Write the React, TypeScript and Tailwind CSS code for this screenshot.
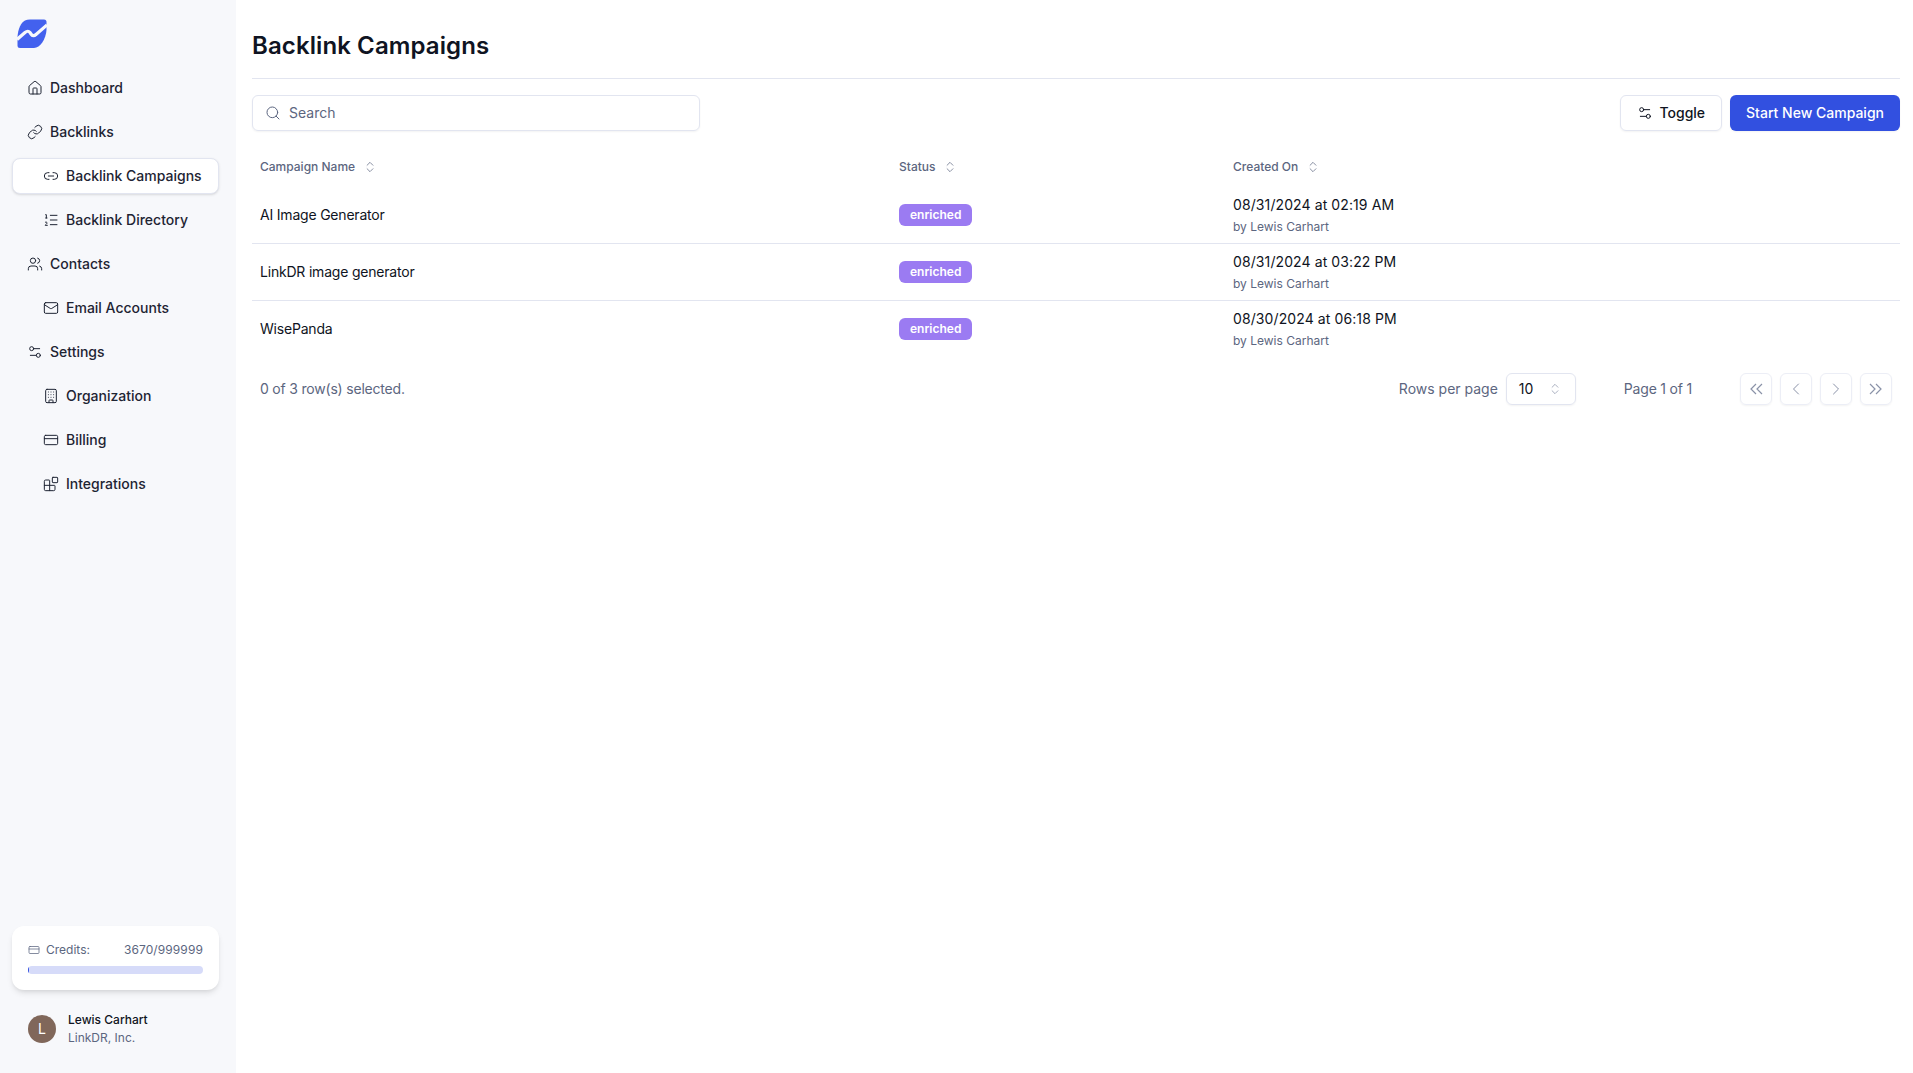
import React from 'react';
import {
  House,
  Link,
  Link2,
  ListOrdered,
  Users,
  Mail,
  Settings2,
  Building,
  CreditCard,
  Blocks,
  Search,
  ChevronsUpDown,
  ChevronLeft,
  ChevronRight,
} from 'lucide-react';

const navItems = [
  { label: 'Dashboard', icon: House, sub: false },
  { label: 'Backlinks', icon: Link, sub: false },
  { label: 'Backlink Campaigns', icon: Link2, sub: true, active: true },
  { label: 'Backlink Directory', icon: ListOrdered, sub: true },
  { label: 'Contacts', icon: Users, sub: false },
  { label: 'Email Accounts', icon: Mail, sub: true },
  { label: 'Settings', icon: Settings2, sub: false },
  { label: 'Organization', icon: Building, sub: true },
  { label: 'Billing', icon: CreditCard, sub: true },
  { label: 'Integrations', icon: Blocks, sub: true },
];

const rows = [
  { name: 'AI Image Generator', created: '08/31/2024 at 02:19 AM' },
  { name: 'LinkDR image generator', created: '08/31/2024 at 03:22 PM' },
  { name: 'WisePanda', created: '08/30/2024 at 06:18 PM' },
];

const columns = ['Campaign Name', 'Status', 'Created On'];

const Logo = () => (
  <svg width="30" height="30" viewBox="0 0 30 30" fill="none">
    <path
      d="M8 1.5Q10 .5 13 .5H27Q29.5 .5 29.5 3V11C29 20 23 29 17 29H3Q.5 29 .5 26.5V18C1 10 4 3.5 8 1.5Z"
      fill="#4361ee"
    />
    <path
      d="M0 20.5L8 13.5Q11 11 13 13.5L14 15Q16 18 19 15.5L30 6"
      stroke="#f7f8fb"
      strokeWidth="3.2"
    />
  </svg>
);

const DoubleLeft = () => (
  <svg width="16" height="16" viewBox="0 0 16 16" fill="none" stroke="currentColor" strokeWidth="1.2">
    <path d="M8 3L3 8l5 5" />
    <path d="M14 3L9 8l5 5" />
  </svg>
);

const DoubleRight = () => (
  <svg width="16" height="16" viewBox="0 0 16 16" fill="none" stroke="currentColor" strokeWidth="1.2">
    <path d="M2 3l5 5-5 5" />
    <path d="M8 3l5 5-5 5" />
  </svg>
);

const Sidebar = () => (
  <aside className="w-[236px] shrink-0 h-screen flex flex-col bg-[#f7f8fb] pl-3 pr-[17px]">
    <div className="pt-[19px] pl-[5px] h-[70px]">
      <Logo />
    </div>
    <nav className="flex flex-col gap-2">
      {navItems.map(item => {
        const Icon = item.icon;
        return (
          <div
            key={item.label}
            className={`h-9 flex items-center gap-[7px] rounded-lg text-sm font-medium text-[#1e2433] border ${
              item.sub ? 'pl-[30px]' : 'pl-[14px]'
            } ${item.active ? 'bg-white border-[#e2e5f0] shadow-sm' : 'border-transparent'}`}
          >
            <Icon size={16} strokeWidth={1.5} className="shrink-0" />
            <span>{item.label}</span>
          </div>
        );
      })}
    </nav>
    <div className="mt-auto">
      <div className="bg-white rounded-xl shadow-md px-4 py-4 h-[64px]">
        <div className="flex items-center justify-between text-xs text-[#5c6680] leading-4">
          <span className="flex items-center gap-[6px]">
            <CreditCard size={12} strokeWidth={1.5} />
            Credits:
          </span>
          <span className="tracking-[0.1px]">3670/999999</span>
        </div>
        <div className="mt-2 h-2 rounded-full bg-[#d6dbf9] overflow-hidden">
          <div className="h-full bg-[#3250e0]" style={{ width: `${(3670 / 999999) * 100}%` }} />
        </div>
      </div>
      <div className="flex items-center gap-3 pl-4 mt-[21px] mb-[26px]">
        <div className="w-7 h-7 rounded-full bg-[#80675a] text-white text-sm flex items-center justify-center">L</div>
        <div className="text-xs leading-[18px]">
          <div className="font-medium text-[#0f1422]">Lewis Carhart</div>
          <div className="text-[#5c6680]">LinkDR, Inc.</div>
        </div>
      </div>
    </div>
  </aside>
);

const PageButton = ({ children }: { children: React.ReactNode }) => (
  <button className="w-8 h-8 flex items-center justify-center rounded-md border border-[#eceef6] text-[#8a92a8] shadow-xs">
    {children}
  </button>
);

export default function App() {
  return (
    <div className="flex h-screen bg-white font-['Inter',sans-serif] overflow-hidden">
      <Sidebar />
      <main className="flex-1 pl-4 pr-[13px]">
        <h1 className="h-[79px] flex items-center pt-[14px] text-2xl font-semibold tracking-[0.1px] text-[#0f1422] border-b border-[#e2e5f0]">
          Backlink Campaigns
        </h1>
        <div className="flex items-center justify-between mt-4">
          <div className="w-[448px] h-9 flex items-center gap-2 px-3 rounded-md border border-[#e2e5f0] shadow-xs text-sm text-[#5c6680]">
            <Search size={16} strokeWidth={1.5} />
            <span>Search</span>
          </div>
          <div className="flex items-center gap-2">
            <button className="h-9 px-4 flex items-center gap-[6px] rounded-md border border-[#e2e5f0] shadow-xs text-sm font-medium text-[#0f1422]">
              <Settings2 size={16} strokeWidth={1.5} />
              Toggle
            </button>
            <button className="h-9 px-4 flex items-center rounded-md bg-[#3250e0] text-sm font-medium text-white shadow-xs">
              Start New Campaign
            </button>
          </div>
        </div>
        <div className="grid grid-cols-[639px_334px_1fr] h-10 items-center mt-4 text-xs font-medium text-[#5c6680]">
          {columns.map(col => (
            <div key={col} className="px-2 flex items-center gap-2">
              <span>{col}</span>
              <ChevronsUpDown size={14} strokeWidth={1.25} />
            </div>
          ))}
        </div>
        {rows.map((row, i) => (
          <div
            key={row.name}
            className={`grid grid-cols-[639px_334px_1fr] items-center h-[57px] text-sm text-[#0f1422] ${
              i < rows.length - 1 ? 'border-b border-[#e2e5f0]' : 'pb-px'
            }`}
          >
            <div className="px-2 tracking-[-0.2px]">{row.name}</div>
            <div className="px-2">
              <span className="inline-flex items-center h-[22px] px-[11px] rounded-md bg-[#9b7bf2] text-xs font-semibold text-white">
                enriched
              </span>
            </div>
            <div className="px-2">
              <div className="leading-5 tracking-[0.1px]">{row.created}</div>
              <div className="text-xs leading-4 mt-[4px] text-[#5c6680]">by Lewis Carhart</div>
            </div>
          </div>
        ))}
        <div className="flex items-center justify-between px-2 mt-px h-[60px] text-sm text-[#5c6680]">
          <span className="tracking-[-0.2px]">0 of 3 row(s) selected.</span>
          <div className="flex items-center">
            <span>Rows per page</span>
            <div className="ml-2 w-[70px] h-8 flex items-center justify-between pl-3 pr-[13px] rounded-md border border-[#e2e5f0] shadow-xs text-[#0f1422]">
              10
              <ChevronsUpDown size={14} strokeWidth={1.25} className="text-[#8a92a8]" />
            </div>
            <span className="ml-12 mr-12 tracking-[-0.2px]">Page 1 of 1</span>
            <div className="flex items-center gap-2">
              <PageButton><DoubleLeft /></PageButton>
              <PageButton><ChevronLeft size={20} strokeWidth={1.2} /></PageButton>
              <PageButton><ChevronRight size={20} strokeWidth={1.2} /></PageButton>
              <PageButton><DoubleRight /></PageButton>
            </div>
          </div>
        </div>
      </main>
    </div>
  );
}
